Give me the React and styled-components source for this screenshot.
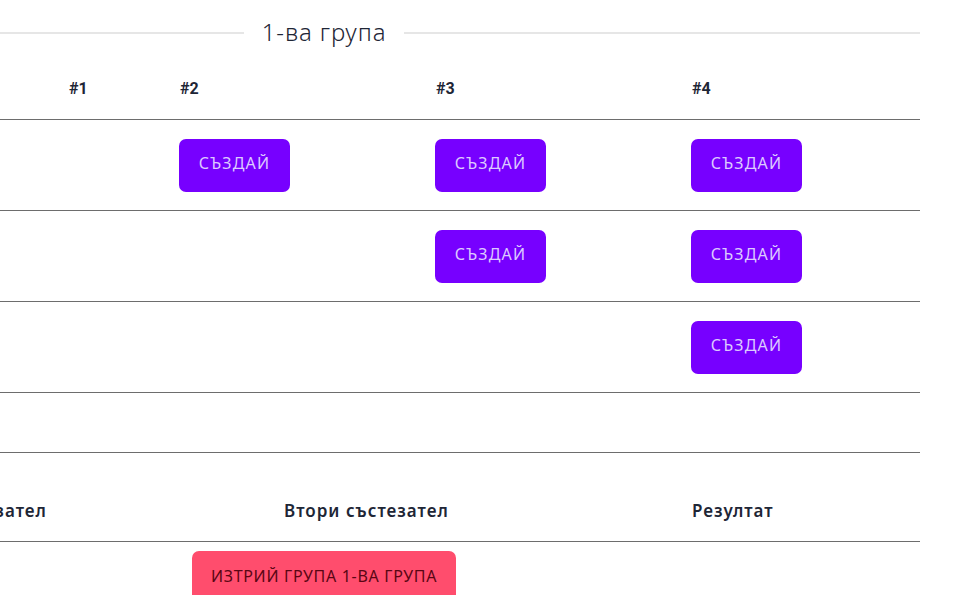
import React from "react";
import styled, { createGlobalStyle } from "styled-components";

const GlobalStyle = createGlobalStyle`
  html, body {
    margin: 0;
    padding: 0;
    background: #ffffff;
    overflow: hidden;
  }
  body {
    font-family: "Noto Sans", "Open Sans", sans-serif;
    color: #1e2636;
  }
`;

const Viewport = styled.div`
  width: 955px;
  height: 595px;
  overflow: hidden;
`;

// the group panel is wider than the window and scrolled to the right
const Panel = styled.div`
  width: 1192px;
  margin-left: -272px;
`;

const GroupTitle = styled.div`
  height: 66px;
  display: flex;
  align-items: center;
  gap: 18px;

  &::before,
  &::after {
    content: "";
    flex: 1;
    height: 2px;
    background: #e6e6e6;
  }

  span {
    font-size: 24px;
    font-weight: 300;
    letter-spacing: 0.9px;
    color: #1e2636;
    margin-top: -3px;
  }
`;

const Grid = styled.div`
  display: grid;
  grid-template-columns: ${(p) => p.$cols};
  align-items: center;
  border-bottom: 1px solid #6d6d6d;
  box-sizing: border-box;
  height: ${(p) => p.$h}px;
  padding: ${(p) => p.$pad || "0"};
`;

const HeadCell = styled.div`
  font-family: Roboto, "Noto Sans", sans-serif;
  font-weight: 700;
  font-size: 16px;
  color: #1e2636;
`;

const Cell = styled.div`
  display: flex;
  align-items: center;
`;

const CreateButton = styled.button`
  width: 111px;
  height: 53px;
  margin-left: -1px;
  padding: 0 0 4px;
  border: none;
  border-radius: 7px;
  background: #7700ff;
  color: #dccaff;
  font-family: "Noto Sans", sans-serif;
  font-size: 16px;
  letter-spacing: 1.2px;
  text-transform: uppercase;
  cursor: pointer;
`;

const ColTitle = styled.div`
  font-weight: 600;
  font-size: 17px;
  letter-spacing: 1px;
  color: #1e2636;
  align-self: end;
  white-space: nowrap;
`;

const Footer = styled.div`
  padding: 9px 0 0 464px;
`;

const DeleteButton = styled.button`
  width: 264px;
  height: 53px;
  padding: 0 0 3px;
  border: none;
  border-radius: 7px;
  background: #ff4d6d;
  color: #5a0614;
  font-family: "Noto Sans", sans-serif;
  font-size: 16px;
  letter-spacing: 0.7px;
  text-transform: uppercase;
  cursor: pointer;
`;

const matchCols = "341px 111px 256px 256px 228px";

// which cells of each row hold a "create" button
const rows = [
  [false, false, true, true, true],
  [false, false, false, true, true],
  [false, false, false, false, true],
];

export default function App() {
  return (
    <Viewport>
      <GlobalStyle />
      <Panel>
        <GroupTitle>
          <span>1-ва група</span>
        </GroupTitle>

        <Grid $cols={matchCols} $h={54} $pad="0 0 8px 0">
          <HeadCell />
          <HeadCell>#1</HeadCell>
          <HeadCell>#2</HeadCell>
          <HeadCell>#3</HeadCell>
          <HeadCell>#4</HeadCell>
        </Grid>

        {rows.map((row, i) => (
          <Grid key={i} $cols={matchCols} $h={91}>
            {row.map((has, j) => (
              <Cell key={j}>{has && <CreateButton>Създай</CreateButton>}</Cell>
            ))}
          </Grid>
        ))}

        <Grid $cols={matchCols} $h={60} />

        <Grid $cols="150px 406px 408px 228px" $h={89} $pad="0 0 19px 0">
          <div />
          <ColTitle>Първи състезател</ColTitle>
          <ColTitle>Втори състезател</ColTitle>
          <ColTitle>Резултат</ColTitle>
        </Grid>

        <Footer>
          <DeleteButton>Изтрий група 1-ва група</DeleteButton>
        </Footer>
      </Panel>
    </Viewport>
  );
}
